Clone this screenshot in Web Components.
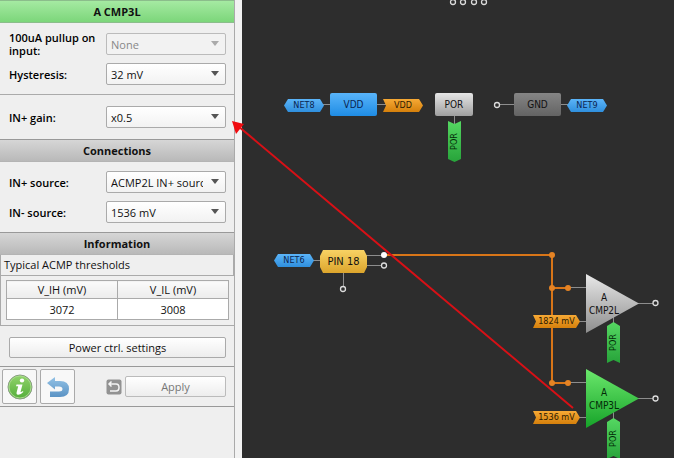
<!DOCTYPE html>
<html lang="en">
<head>
<meta charset="utf-8">
<title>A CMP3L properties</title>
<style>
  body {
    margin: 0;
    font: 11px/13px "Open Sans", "Noto Sans", sans-serif;
    color: #111;
  }
</style>
</head>
<body>
<cmp-designer></cmp-designer>

<script>
(function (customElements) {
  const attach = (host, html) => {
    const template = document.createElement('template');
    template.innerHTML = html;
    host.attachShadow({ mode: 'open' }).appendChild(template.content.cloneNode(true));
  };

  // Label plus drop-down
  class PropRow extends HTMLElement {
    connectedCallback() {
      const disabled = this.hasAttribute('disabled') ? 'disabled' : '';
      attach(this, `
        <style>
          :host { display: flex; align-items: center; gap: 8px; }
          label { flex: 1; min-width: 0; margin: -2px 0; font-weight: 600; color: #000; }
          .box { position: relative; flex: 0 0 120px; display: flex; }
          select {
            appearance: none; box-sizing: border-box; width: 100%; height: 22px; margin: 0;
            padding: 0 22px 0 4px; font: inherit; color: #111;
            border: 1px solid #aaa; border-radius: 2px;
            background: linear-gradient(#fff, #f2f2f2);
          }
          select:disabled { color: #888; opacity: 1; border-color: #bbb; background: #f2f2f2; }
          svg { position: absolute; right: 7px; top: 8px; fill: #555; pointer-events: none; }
          select:disabled + svg { fill: #aaa; }
        </style>
        <label for="value">${this.getAttribute('label')}</label>
        <div class="box">
          <select id="value" ${disabled}><option>${this.getAttribute('value')}</option></select>
          <svg width="8" height="5"><path d="M0 0H8L4 5Z"/></svg>
        </div>`);
    }
  }

  class PanelHeading extends HTMLElement {
    connectedCallback() {
      attach(this, `
        <style>
          :host {
            display: block; text-align: center; line-height: 21px;
            border-top: 1px solid #999; border-bottom: 1px solid #b4b4b4;
            background: linear-gradient(#d6d6d6, #b9b9b9);
          }
          :host([active]) {
            border-color: #8bbd8b; background: linear-gradient(#a5eaa2, #7cd67a);
          }
          h2 { margin: 0; font: inherit; font-weight: 700; }
        </style>
        <h2><slot></slot></h2>`);
    }
  }

  class PushButton extends HTMLElement {
    connectedCallback() {
      const disabled = this.hasAttribute('disabled') ? 'disabled' : '';
      const label = this.getAttribute('label');
      attach(this, `
        <style>
          :host { display: flex; }
          button {
            flex: 1; display: flex; align-items: center; justify-content: center;
            min-height: 21px; margin: 0; padding: 0; font: inherit; color: #111;
            border: 1px solid #aaa; border-radius: 2px;
            background: linear-gradient(#fff, #ededed);
          }
          button:disabled { color: #777; border-color: #bbb; }
          :host([square]) button { flex: 0 0 35px; height: 35px; background: #f8f8f8; }
          :host([bare]) button { border: 0; background: none; }
        </style>
        <button type="button" ${disabled} ${label ? `aria-label="${label}"` : ''}><slot></slot></button>`);
    }
  }

  class ThresholdTable extends HTMLElement {
    connectedCallback() {
      attach(this, `
        <style>
          :host { display: block; border-left: 1px solid #aaa; border-bottom: 1px solid #aaa; }
          .caption { padding: 2px 3px 3px; line-height: 15px; border-bottom: 1px solid #aaa; border-right: 1px solid #aaa; }
          .wrap { padding: 4px 5px 5px; }
          table { width: 100%; border-collapse: collapse; table-layout: fixed; text-align: center; }
          th, td { height: 17px; padding: 0; border: 1px solid #aaa; font-weight: 400; }
          th { background: linear-gradient(#fafafa, #ececec); }
          td { height: 20px; background: #fff; }
        </style>
        <div class="caption" id="caption">Typical ACMP thresholds</div>
        <div class="wrap">
          <table aria-labelledby="caption">
            <thead><tr><th>V_IH (mV)</th><th>V_IL (mV)</th></tr></thead>
            <tbody><tr><td>3072</td><td>3008</td></tr></tbody>
          </table>
        </div>`);
    }
  }

  class PropertiesPanel extends HTMLElement {
    connectedCallback() {
      attach(this, `
        <style>
          :host { display: block; background: #efefef; border-right: 1px solid #aaa; }
          .rows { display: flex; flex-direction: column; gap: 8px; padding: 9px 8px 9px 9px; }
          .rows.top { padding-top: 10px; }
          .rows + .rows { border-top: 1px solid #aaa; padding: 11px 8px 11px 9px; }
          .power { padding: 11px 8px 8px 9px; }
          .actions {
            display: flex; align-items: center; padding: 2px 8px 2px 2px; gap: 3px;
            border-top: 1px solid #999; border-bottom: 1px solid #999;
          }
          .restore { margin-left: auto; }
          .apply { flex: 0 0 101px; }
        </style>
        <panel-heading active>A CMP3L</panel-heading>
        <div class="rows top">
          <prop-row label="100uA pullup on input:" value="None" disabled></prop-row>
          <prop-row label="Hysteresis:" value="32 mV"></prop-row>
        </div>
        <div class="rows">
          <prop-row label="IN+ gain:" value="x0.5"></prop-row>
        </div>
        <panel-heading>Connections</panel-heading>
        <div class="rows">
          <prop-row label="IN+ source:" value="ACMP2L IN+ source"></prop-row>
          <prop-row label="IN- source:" value="1536 mV"></prop-row>
        </div>
        <panel-heading>Information</panel-heading>
        <threshold-table></threshold-table>
        <div class="power"><push-button>Power ctrl. settings</push-button></div>
        <div class="actions">
          <push-button square label="Information">
            <svg width="26" height="26" viewBox="0 0 26 26">
              <defs><linearGradient id="g" x2="0" y2="1"><stop stop-color="#92d46b"/><stop offset="1" stop-color="#54ad3b"/></linearGradient></defs>
              <circle cx="13" cy="13" r="12" fill="url(#g)" stroke="#8a9a84"/>
              <circle cx="13" cy="13" r="11" fill="none" stroke="#a8dc8c"/>
              <ellipse cx="15" cy="6.500" rx="2.200" ry="1.900" fill="#fff"/>
              <path d="M9.500 10.500H15.500L13.500 18Q14.500 18.200 16 17L16.300 18Q13.500 21 11 20.800Q9 20.500 9.700 18L11.200 12.300H9Z" fill="#fff"/>
            </svg>
          </push-button>
          <push-button square label="Undo">
            <svg width="24" height="24" viewBox="0 0 24 24">
              <defs><linearGradient id="b" x2="0" y2="1"><stop stop-color="#93c2e6"/><stop offset="1" stop-color="#5b93c4"/></linearGradient></defs>
              <path d="M1 8L9 2V6H14Q23 6 23 14Q23 22 14 22H4V16.500H13Q16.500 16.500 16.500 14Q16.500 11.500 13 11.500H9V14.500Z" fill="url(#b)"/>
            </svg>
          </push-button>
          <push-button class="restore" bare label="Restore">
            <svg width="16" height="16" viewBox="0 0 16 16">
              <rect x="0.500" y="0.500" width="15" height="15" rx="2" fill="#929292"/>
              <path d="M5.500 2.500L3 5L5.500 7.500M3 5H10Q13 5 13 8.500T10 12H4" fill="none" stroke="#f4f4f4" stroke-width="1.500"/>
            </svg>
          </push-button>
          <push-button class="apply" disabled>Apply</push-button>
        </div>`);
    }
  }

  // Named net: pointed both ends, or notched on the incoming end
  class NetTag extends HTMLElement {
    connectedCallback() {
      attach(this, `
        <style>
          :host {
            position: absolute; display: flex; align-items: center; justify-content: center;
            box-sizing: border-box; width: 40px; height: 13px; font-size: 9px; line-height: 13px;
            white-space: nowrap; color: #0a2450;
            background: linear-gradient(#5bb4f8, #2f8fdd);
            clip-path: polygon(0 50%, 4px 0, calc(100% - 4px) 0, 100% 50%, calc(100% - 4px) 100%, 4px 100%);
          }
          :host([kind="ref"]) {
            color: #2e1a00; background: linear-gradient(#f6a935, #d5800c);
            clip-path: polygon(0 0, calc(100% - 4px) 0, 100% 50%, calc(100% - 4px) 100%, 0 100%, 3px 50%);
          }
          :host([wide]) { width: 47px; }
          :host([kind="down"]), :host([kind="up"]) {
            width: 13px; height: 41px; color: #032b08;
            background: linear-gradient(#55d862, #27a33a);
          }
          :host([kind="down"]) { clip-path: polygon(0 0, 50% 3px, 100% 0, 100% calc(100% - 3px), 50% 100%, 0 calc(100% - 3px)); }
          :host([kind="up"]) { clip-path: polygon(50% 0, 100% 4px, 100% 100%, 50% calc(100% - 3px), 0 100%, 0 4px); }
          :host([kind="down"]) span, :host([kind="up"]) span { writing-mode: vertical-rl; transform: rotate(180deg); }
        </style>
        <span><slot></slot></span>`);
    }
  }

  class BlockNode extends HTMLElement {
    connectedCallback() {
      attach(this, `
        <style>
          :host {
            position: absolute; display: flex; align-items: center; justify-content: center;
            width: 47px; height: 23px; border-radius: 2px; font-size: 10px;
            color: #111; white-space: nowrap;
          }
          :host([kind="power"]) { color: #0a2450; background: linear-gradient(#58b4fa, #1f8ce4); }
          :host([kind="reset"]) { width: 38px; background: linear-gradient(#e6e6e6, #9f9f9f); }
          :host([kind="ground"]) { background: linear-gradient(#858585, #636363); }
          :host([kind="pin"]) {
            font-size: 11px; background: linear-gradient(#f8d264, #dca52c);
            clip-path: polygon(3px 0, calc(100% - 3px) 0, 100% 6px, 100% calc(100% - 6px), calc(100% - 3px) 100%, 3px 100%, 0 calc(100% - 6px), 0 6px);
          }
        </style>
        <slot></slot>`);
    }
  }

  class ComparatorNode extends HTMLElement {
    connectedCallback() {
      attach(this, `
        <style>
          :host {
            position: absolute; display: flex; align-items: center; box-sizing: border-box;
            width: 53px; height: 59px; padding-left: 1px; color: #111;
            font-size: 10px; line-height: 13px; text-align: center;
            background: linear-gradient(#e8e8e8, #8e8e8e);
            clip-path: polygon(0 0, 100% 50%, 0 100%);
          }
          :host([active]) { color: #032b08; background: linear-gradient(#6be86c, #16a329); }
          div { width: 34px; }
        </style>
        <div>A<br><slot></slot></div>`);
    }
  }

  class SchematicView extends HTMLElement {
    connectedCallback() {
      attach(this, `
        <style>
          :host {
            display: block; position: relative; background: #2d2d2d;
            font-family: "DejaVu Sans Condensed", "DejaVu Sans", sans-serif;
          }
          svg { position: absolute; left: 0; top: 0; overflow: visible; pointer-events: none; }
        </style>
        <svg width="432" height="458" fill="none">
          <g stroke="#8d8d8d">
            <path d="M81 104.500H89M134 104.500H145M212.500 116V124M258 104.500H272M319 104.500H326"/>
            <path d="M71 260.500H79M123 255.500H142M123 265.500H142M101.500 271V286"/>
            <path d="M326 287.500H345M336 321.500H345M396 303.500H411M371.500 316V324"/>
            <path d="M326 382.500H345M336 417.500H345M396 398.500H411M371.500 411V420"/>
          </g>
          <path d="M142 255H310V383H326M310 288H326" stroke="#d87518" stroke-width="2"/>
          <g fill="#e58324">
            <circle cx="310" cy="255" r="3"/><circle cx="310" cy="288" r="3"/><circle cx="326" cy="288" r="3"/>
            <circle cx="310" cy="383" r="3"/><circle cx="326" cy="383" r="3"/>
          </g>
          <circle cx="142" cy="255" r="3" fill="#fff"/>
          <g stroke="#ddd" stroke-width="1.300" fill="#2d2d2d">
            <circle cx="211" cy="2" r="2.500"/><circle cx="221" cy="2" r="2.500"/>
            <circle cx="232" cy="2" r="2.500"/><circle cx="242" cy="2" r="2.500"/>
            <circle cx="255" cy="105" r="2.500"/><circle cx="142" cy="265.500" r="2.500"/>
            <circle cx="101" cy="289" r="2.500"/>
            <circle cx="413.500" cy="303" r="2.500"/><circle cx="413.500" cy="398.500" r="2.500"/>
          </g>
        </svg>

        <net-tag style="left:42px;top:99px">NET8</net-tag>
        <block-node kind="power" style="left:88px;top:93px">VDD</block-node>
        <net-tag kind="ref" style="left:141px;top:99px">VDD</net-tag>
        <block-node kind="reset" style="left:193px;top:93px">POR</block-node>
        <net-tag kind="down" style="left:206px;top:121px">POR</net-tag>
        <block-node kind="ground" style="left:272px;top:93px">GND</block-node>
        <net-tag style="left:325px;top:99px">NET9</net-tag>

        <net-tag style="left:32px;top:254px">NET6</net-tag>
        <block-node kind="pin" style="left:78px;top:250px">PIN 18</block-node>

        <comparator-node style="left:344px;top:274px">CMP2L</comparator-node>
        <net-tag kind="ref" wide style="left:291px;top:315px">1824 mV</net-tag>
        <net-tag kind="up" style="left:365px;top:322px">POR</net-tag>

        <comparator-node active style="left:344px;top:369px">CMP3L</comparator-node>
        <net-tag kind="ref" wide style="left:291px;top:411px">1536 mV</net-tag>
        <net-tag kind="up" style="left:365px;top:418px">POR</net-tag>

        <svg width="432" height="458">
          <path d="M331 408L-4 126" stroke="#d81016" stroke-width="2"/>
          <path d="M-10 121L2 124L-6 134Z" fill="#f00c10"/>
        </svg>`);
    }
  }

  class CmpDesigner extends HTMLElement {
    connectedCallback() {
      attach(this, `
        <style>
          :host { display: flex; height: 100vh; overflow: hidden; background: #f2f2f2; }
          properties-panel { flex: 0 0 234px; }
          schematic-view { flex: 1; margin-left: 7px; }
        </style>
        <properties-panel></properties-panel>
        <schematic-view></schematic-view>`);
    }
  }

  customElements.define('prop-row', PropRow);
  customElements.define('panel-heading', PanelHeading);
  customElements.define('push-button', PushButton);
  customElements.define('threshold-table', ThresholdTable);
  customElements.define('properties-panel', PropertiesPanel);
  customElements.define('net-tag', NetTag);
  customElements.define('block-node', BlockNode);
  customElements.define('comparator-node', ComparatorNode);
  customElements.define('schematic-view', SchematicView);
  customElements.define('cmp-designer', CmpDesigner);
})(window.customElements);
</script>
</body>
</html>
